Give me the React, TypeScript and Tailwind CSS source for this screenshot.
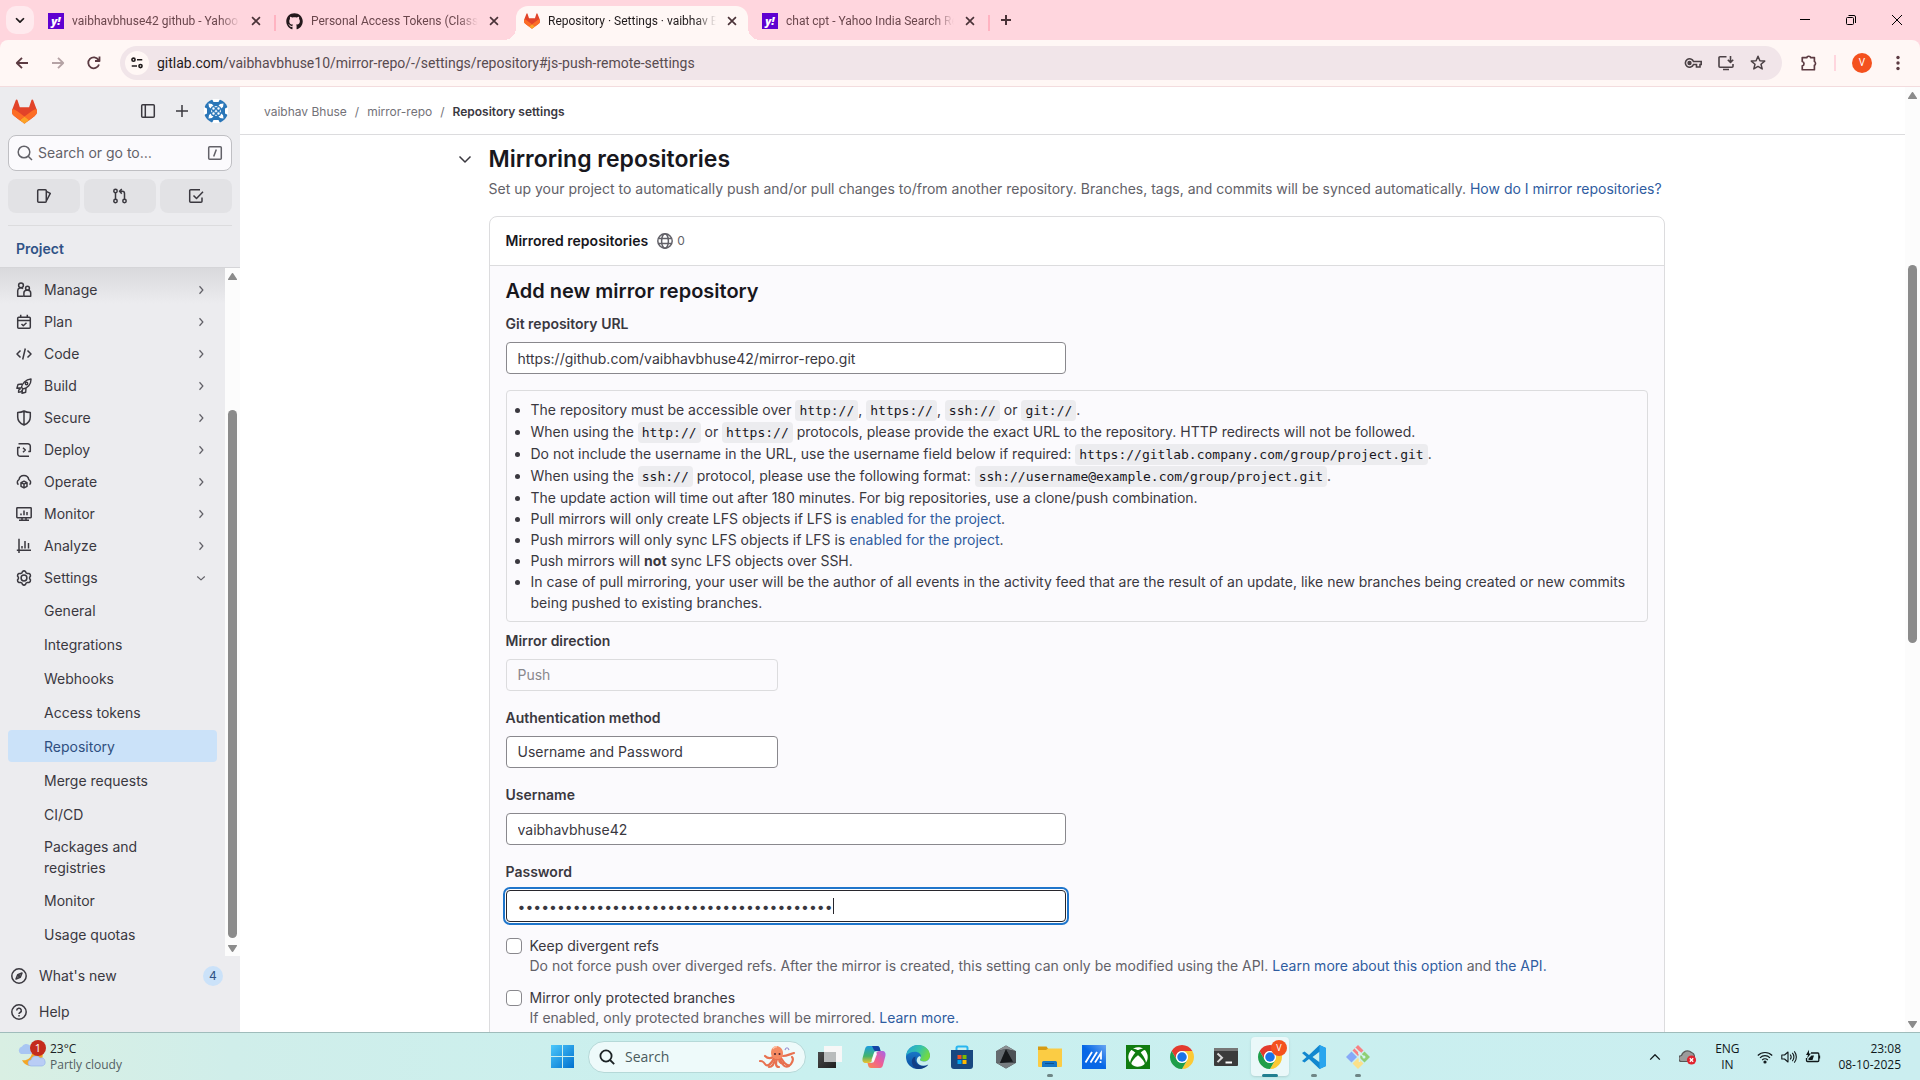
import { useState, type ReactNode } from "react";
import { FaGithub, FaXbox } from "react-icons/fa";

/* ---------- shared drawings ---------- */

function Icon({ children, size = 16, width = 1.5, className = "" }: { children: ReactNode; size?: number; width?: number; className?: string }) {
  return (
    <svg viewBox="0 0 16 16" width={size} height={size} fill="none" stroke="currentColor" strokeWidth={width} strokeLinecap="butt" strokeLinejoin="round" className={`shrink-0 ${className}`} aria-hidden="true">
      {children}
    </svg>
  );
}

function GitLabLogo({ size }: { size: number }) {
  return (
    <svg viewBox="0 0 25 24" width={size} height={size} className="shrink-0" aria-hidden="true">
      <path d="m24.507 9.5-.034-.09L21.082.562a.896.896 0 0 0-1.694.091l-2.29 7.01H7.825L5.535.653a.898.898 0 0 0-1.694-.09L.451 9.411.416 9.5a6.297 6.297 0 0 0 2.09 7.278l.012.01.03.022 5.16 3.867 2.56 1.935 1.554 1.176a1.051 1.051 0 0 0 1.268 0l1.555-1.176 2.56-1.935 5.197-3.89.014-.01A6.297 6.297 0 0 0 24.507 9.5Z" fill="#E24329" />
      <path d="m24.507 9.5-.034-.09a11.44 11.44 0 0 0-4.56 2.051l-7.447 5.632 4.742 3.584 5.197-3.89.014-.01A6.297 6.297 0 0 0 24.507 9.5Z" fill="#FC6D26" />
      <path d="m7.707 20.677 2.56 1.935 1.555 1.176a1.051 1.051 0 0 0 1.268 0l1.555-1.176 2.56-1.935-4.743-3.584-4.755 3.584Z" fill="#FCA326" />
      <path d="M5.01 11.461a11.43 11.43 0 0 0-4.56-2.05L.416 9.5a6.297 6.297 0 0 0 2.09 7.278l.012.01.03.022 5.16 3.867 4.745-3.584-7.444-5.632Z" fill="#FC6D26" />
    </svg>
  );
}

function YahooIcon() {
  return (
    <span className="flex size-4 shrink-0 items-center justify-center bg-[#5f01d1] font-['Open_Sans',sans-serif] text-[11px] leading-4 font-extrabold text-white italic">
      y!
    </span>
  );
}

function ChromeLogo() {
  const arm = "M24 12H44.78A24 24 0 0 0 3.22 12L13.6 30A12 12 0 0 1 24 12Z";
  return (
    <svg viewBox="0 0 48 48" width="24" height="24" aria-hidden="true">
      <path d={arm} fill="#e33b2e" />
      <path d={arm} fill="#fcc934" transform="rotate(120 24 24)" />
      <path d={arm} fill="#1e9e4a" transform="rotate(240 24 24)" />
      <circle cx="24" cy="24" r="12" fill="#fff" />
      <circle cx="24" cy="24" r="9.5" fill="#1a73e8" />
    </svg>
  );
}

/* ---------- browser ---------- */

function Tab({ icon, title, active = false }: { icon: ReactNode; title: string; active?: boolean }) {
  return (
    <div className={`relative flex h-[34px] w-[232px] shrink-0 items-center px-2 pb-1 ${active ? "rounded-t-xl bg-[#fff7f5] text-[#1f1a1b]" : "text-[#6b474d]"}`}>
      {active && (
        <>
          <span className="absolute bottom-0 -left-3 size-3 bg-[radial-gradient(circle_at_0_0,#ffd6de_12px,#fff7f5_12px)]" />
          <span className="absolute -right-3 bottom-0 size-3 bg-[radial-gradient(circle_at_100%_0,#ffd6de_12px,#fff7f5_12px)]" />
        </>
      )}
      {icon}
      <span className="ml-2 min-w-0 flex-1 overflow-hidden text-xs whitespace-nowrap [mask-image:linear-gradient(to_right,#000_88%,transparent)]">{title}</span>
      <button aria-label={`Close ${title}`} className="ml-2 flex size-4 items-center justify-center text-[#4a3338]">
        <Icon size={14} width={1.9}><path d="M3.5 3.5l9 9M12.5 3.5l-9 9" /></Icon>
      </button>
    </div>
  );
}

function TabStrip() {
  return (
    <div className="flex h-10 items-end bg-[#ffd6de] text-[#4a3338]">
      <button aria-label="Search tabs" className="mb-[6px] ml-[6px] flex size-7 shrink-0 items-center justify-center rounded-[10px] bg-[#ffeaee] text-[#1f1a1b]">
        <Icon size={14} width={2}><path d="M3.5 6l4.5 4.500L12.500 6" /></Icon>
      </button>
      <div className="ml-[6px] flex items-center gap-[2px]">
        <Tab icon={<YahooIcon />} title="vaibhavbhuse42 github - Yahoo" />
        <span className="h-4 w-[2px] bg-[#ffb3c1]" />
        <Tab icon={<FaGithub size={17} className="shrink-0 text-[#24191c]" />} title="Personal Access Tokens (Classic)" />
        <span className="w-[2px]" />
        <Tab active icon={<GitLabLogo size={16} />} title="Repository · Settings · vaibhav B" />
        <span className="w-[2px]" />
        <Tab icon={<YahooIcon />} title="chat cpt - Yahoo India Search Re" />
        <span className="h-4 w-[2px] bg-[#ffb3c1]" />
      </div>
      <button aria-label="New tab" className="mb-3 ml-2 flex size-4 items-center justify-center">
        <Icon size={16} width={2}><path d="M8 3v10M3 8h10" /></Icon>
      </button>
      <div className="mb-2 ml-auto flex text-black">
        <button aria-label="Minimize" className="flex h-6 w-[46px] items-center justify-center"><Icon size={16} width={1}><path d="M3 7.500h10" /></Icon></button>
        <button aria-label="Restore" className="flex h-6 w-[46px] items-center justify-center">
          <Icon size={16} width={1}><rect x="3.500" y="5.500" width="7" height="7" rx="1" /><path d="M5.500 3.500H11a1.500 1.500 0 0 1 1.500 1.500v6" /></Icon>
        </button>
        <button aria-label="Close" className="flex h-6 w-[46px] items-center justify-center"><Icon size={16} width={1}><path d="M3 3l10 10M13 3L3 13" /></Icon></button>
      </div>
    </div>
  );
}

function AddressBar() {
  return (
    <div className="bg-[#ffd6de]">
      <div className="flex h-[47px] items-center rounded-t-lg border-b border-[#f3dcde] bg-[#fff7f5] pr-[14px] text-[#5c3b42]">
        <div className="flex w-[120px] shrink-0 gap-5 pl-[14px]">
          <button aria-label="Back"><Icon size={16} width={1.8}><path d="M14 8H2.500M8 2.800L2.800 8 8 13.200" /></Icon></button>
          <button aria-label="Forward" className="text-[#b5a3a5]"><Icon size={16} width={1.800}><path d="M2 8h11.500M8 2.800L13.200 8 8 13.200" /></Icon></button>
          <button aria-label="Reload"><Icon size={16} width={1.800}><path d="M13 9.500A5.500 5.500 0 1 1 12.500 5M13.500 1.500V6H9" /></Icon></button>
        </div>
        <div className="flex h-[34px] min-w-0 flex-1 items-center rounded-full bg-[#f1e5e9] pr-4 pl-[5px]">
          <button aria-label="View site information" className="flex size-6 items-center justify-center rounded-full bg-[#fff7f5] text-[#1f1a1b]">
            <Icon size={14} width={1.800}><circle cx="4" cy="4.200" r="1.800" /><path d="M8 4.200h6M2 11.500h6" /><circle cx="12" cy="11.500" r="1.800" /></Icon>
          </button>
          <span className="ml-2 flex-1 truncate text-sm text-[#584b50]">
            <span className="text-[#1f1a1b]">gitlab.com</span>/vaibhavbhuse10/mirror-repo/-/settings/repository#js-push-remote-settings
          </span>
          <div className="flex items-center gap-4 text-[#4b4145]">
            <button aria-label="Saved passwords"><svg width="18" height="16" viewBox="0 0 18 16" fill="none" stroke="currentColor" strokeWidth="1.600" aria-hidden="true"><path d="M9.500 6.500H17.200V9.500H16V12H12.500V9.500H9.500A4.200 4.200 0 1 1 9.500 6.500Z" /><circle cx="5.500" cy="8" r="1.400" fill="currentColor" /></svg></button>
            <button aria-label="Install app"><Icon size={16} width={1.600}><path d="M8.500 1.800H2A1 1 0 0 0 1 2.800v8.400a1 1 0 0 0 1 1h12a1 1 0 0 0 1-1V9M5 14.500h6M12.500 1v6M9.800 4.800l2.700 2.700 2.700-2.700" /></Icon></button>
            <button aria-label="Bookmark this tab"><Icon size={16} width={1.500}><path d="M8 1.300l1.900 4.400 4.800.4-3.700 3.100 1.200 4.700L8 11.400l-4.200 2.500L5 9.200 1.300 6.100l4.800-.4z" /></Icon></button>
          </div>
        </div>
        <button aria-label="Extensions" className="ml-[18px]"><Icon size={18} width={1.500}><path d="M2 3.200h4.200a1.600 1.200 0 0 1 3.200 0h3.400v3.500a1.300 1.700 0 0 1 0 3.300v4H2v-3.400a2 2 0 0 0 0-3.900z" /></Icon></button>
        <span className="ml-4 h-4 w-[2px] bg-[#ffd6de]" />
        <button aria-label="Profile" className="ml-4 flex size-5 items-center justify-center rounded-full bg-[#f4511e] text-[10px] leading-5 text-white">V</button>
        <button aria-label="Menu" className="ml-[18px]"><svg width="16" height="16" viewBox="0 0 16 16" fill="currentColor" aria-hidden="true"><circle cx="8" cy="2.500" r="1.700" /><circle cx="8" cy="8" r="1.700" /><circle cx="8" cy="13.500" r="1.700" /></svg></button>
      </div>
    </div>
  );
}

function Arrow({ down = false }: { down?: boolean }) {
  return (
    <svg width="9" height="7" viewBox="0 0 9 7" fill="#8b8b8b" aria-hidden="true">
      {down ? <path d="M.5 0h8a.6.6 0 0 1 .4 1L5.300 6.500a1 1 0 0 1-1.600 0L.1 1a.6.6 0 0 1 .4-1z" /> : <path d="M.5 7h8a.6.6 0 0 0 .4-1L5.300.5a1 1 0 0 0-1.600 0L.1 6a.6.6 0 0 0 .4 1z" />}
    </svg>
  );
}

/* ---------- GitLab sidebar ---------- */

const navItems: { label: string; icon: ReactNode }[] = [
  { label: "Manage", icon: <Icon><circle cx="5" cy="3.300" r="2.400" /><path d="M7.500 14.300H1.700V8.800a3 3 0 0 1 5.200-2" /><circle cx="11.500" cy="6.200" r="1.900" /><path d="M7.900 14.300v-3.200a2.800 2.800 0 0 1 2.800-2.800h1.200a2.800 2.800 0 0 1 2.800 2.800v3.200z" /></Icon> },
  { label: "Plan", icon: <Icon><rect x="1.700" y="3.300" width="12.600" height="11" rx="1" /><path d="M1.700 6.500h12.600M4.700.8v3M11.300.8v3M5.500 10l1.800 1.700L10.500 8.800" /></Icon> },
  { label: "Code", icon: <Icon><path d="M4.500 4.500L1 8l3.500 3.500M11.500 4.500L15 8l-3.500 3.500M9.300 2.500l-2.600 11" /></Icon> },
  { label: "Build", icon: <Icon width={1.400}><path d="M5.500 9.200c.6-3.700 4-7.700 9.500-8.200.2 5.500-3.500 9.300-8 9.900zM6 6L2 6.500.9 10.300l4.300-.6M10 10.300l-.3 4L6 15.300l.6-4.200M5.200 10.500c-1.700 0-2.700 1.500-2.700 3.800 1.800 0 3-.6 3.800-2" /><circle cx="10.500" cy="5.500" r="1.200" /></Icon> },
  { label: "Secure", icon: <Icon><path d="M8 1C6 2.200 4 2.600 1.700 2.600V7c0 3.800 2.300 6.500 6.300 8 4-1.500 6.300-4.200 6.300-8V2.600C12 2.600 10 2.200 8 1zM8 1v14" /></Icon> },
  { label: "Deploy", icon: <Icon><path d="M2.500 1.700h9.300a2.500 2.500 0 0 1 2.500 2.500v5.300h-2M13 14.300H4.200a2.500 2.500 0 0 1-2.500-2.500V5.500H4M7 5.700L9.300 8 7 10.300" /></Icon> },
  { label: "Operate", icon: <Icon><path d="M2.500 10.700A3 3 0 0 1 3 5.600 5 5 0 0 1 12.800 5.600a3 3 0 0 1 .7 5.100" /><path d="M8 7.200l3 1.500v3.600l-3 1.600-3-1.600V8.700zM5 8.700l3 1.500 3-1.500M8 10.200v3.700" /></Icon> },
  { label: "Monitor", icon: <Icon><rect x=".8" y="1.700" width="14.400" height="10" rx=".6" /><path d="M5 7.500v1.800M8 4.500v4.800M11 6v3.300M6 11.700v2.600M10 11.700v2.600M3 14.300h10" /></Icon> },
  { label: "Analyze", icon: <Icon><path d="M3 .8V15M.8 12.300H15M6 8v2.500M9 3v7.500M12.500 5v5.500" /></Icon> },
  { label: "Settings", icon: <Icon><path d="M6.500 1.500l1.500-.7 1.500.7.500 1.300 1.500.8 1.400-.2 1.300 1 .3 1.700-.9 1.200v1.400l.9 1.200-.3 1.700-1.300 1-1.400-.2-1.500.8-.5 1.300-1.500.7-1.500-.7-.500-1.300-1.500-.8-1.400.2-1.300-1-.3-1.700.9-1.200V7.300l-.9-1.200.3-1.700 1.300-1 1.400.2 1.500-.8z" /><circle cx="8" cy="8" r="2.900" /></Icon> },
];

const settingsItems = ["General", "Integrations", "Webhooks", "Access tokens", "Repository", "Merge requests", "CI/CD", "Packages and registries", "Monitor", "Usage quotas"];

function Sidebar() {
  return (
    <aside className="flex w-60 shrink-0 flex-col bg-[#ececef] text-sm text-[#3a383f]">
      <div className="flex h-12 items-center pr-3 pl-3">
        <a href="#home" aria-label="Homepage"><GitLabLogo size={25} /></a>
        <button aria-label="Collapse sidebar" className="ml-auto"><Icon><rect x="1.700" y="1.700" width="12.600" height="12.600" rx="1" /><path d="M5.300 1.700v12.600" /></Icon></button>
        <button aria-label="Create new" className="ml-[18px]"><Icon><path d="M8 2v12M2 8h12" /></Icon></button>
        <button aria-label="User menu" className="ml-[14px]">
          <svg width="24" height="24" viewBox="0 0 24 24" aria-hidden="true">
            <circle cx="12" cy="12" r="12" fill="#2a76b8" />
            <g fill="#fff">
              <path d="M8 0l1.500 3h5L16 0zM8 24l1.500-3h5l1.500 3zM0 8l3 1.500v5L0 16zM24 8l-3 1.500v5l3 1.500z" />
              <path d="M4.500 4.500l3.500.5 1.500 2h5L16 5l3.500-.5L19 8l-2 1.500v5l2 1.500.5 3.500L16 19l-1.500-2h-5L8 19l-3.500.5L5 16l2-1.500v-5L5 8z" />
            </g>
            <g fill="none" stroke="#2a76b8" strokeWidth="1.300">
              <circle cx="9.500" cy="9.500" r="1.900" /><circle cx="14.500" cy="9.500" r="1.900" /><circle cx="9.500" cy="14.500" r="1.900" /><circle cx="14.500" cy="14.500" r="1.900" />
            </g>
          </svg>
        </button>
      </div>
      <div className="px-2">
        <button className="flex h-9 w-full items-center rounded-lg border border-[#bfbfc3] bg-[#fbfafd] px-2 text-[#626168]">
          <Icon><circle cx="7" cy="7" r="5.800" /><path d="M11.200 11.200L15 15" /></Icon>
          <span className="ml-[5px]">Search or go to…</span>
          <Icon className="ml-auto"><rect x="1.700" y="1.700" width="12.600" height="12.600" rx="1" /><path d="M9.300 4.500l-2.600 7" /></Icon>
        </button>
        <div className="mt-2 grid grid-cols-3 gap-1">
          <button aria-label="Assigned issues" className="flex h-[34px] items-center justify-center rounded-lg bg-[#e2e2e5]"><Icon><rect x="1.700" y="1.700" width="8.600" height="12.600" rx="1" /><path d="M10.300 3.300l4 2-3.700 7.200" /></Icon></button>
          <button aria-label="Merge requests" className="flex h-[34px] items-center justify-center rounded-lg bg-[#e2e2e5]"><Icon><circle cx="3.500" cy="3" r="1.700" /><circle cx="3.500" cy="13" r="1.700" /><circle cx="12.500" cy="13" r="1.700" /><path d="M3.500 4.700v6.600M12.500 11.300V5.500a2.200 2.200 0 0 0-2.200-2.200H8M9.800 1L7.500 3.300l2.300 2.300" /></Icon></button>
          <button aria-label="To-do items" className="flex h-[34px] items-center justify-center rounded-lg bg-[#e2e2e5]"><Icon><path d="M14 9.500v3.800a1 1 0 0 1-1 1H2.700a1 1 0 0 1-1-1V2.700a1 1 0 0 1 1-1H12M5.500 7.500l3 3L15 3.800" /></Icon></button>
        </div>
        <div className="mt-3 border-t border-[#dcdcde]" />
      </div>
      <h2 className="flex h-[41px] items-center pt-1 pl-4 font-semibold text-[#2f5286]">Project</h2>
      <div className="flex min-h-0 flex-1 border-t border-[#d5d5d8]">
        <nav className="min-w-0 flex-1 overflow-hidden bg-[linear-gradient(#d9d9dc,#ececef_36px)] px-2 pt-[6px]">
          {navItems.map(({ label, icon }) => (
            <button key={label} className="flex h-8 w-full items-center px-2 text-left">
              {icon}
              <span className="ml-3 flex-1">{label}</span>
              <Icon size={12} width={1.600} className="mr-[2px] text-[#626168]">{label === "Settings" ? <path d="M3 6l5 4.500L13 6" /> : <path d="M6 3l4.500 5L6 13" />}</Icon>
            </button>
          ))}
          {settingsItems.map((label) => (
            <a key={label} href="#settings" className={`mb-[2px] flex min-h-8 items-center rounded py-1 pr-12 pl-9 leading-[21px] ${label === "Repository" ? "bg-[#cbe2f9] text-[#2f4f7f]" : ""}`}>
              {label}
            </a>
          ))}
        </nav>
        <div className="flex w-[15px] shrink-0 flex-col items-center bg-[#fcfcfc] pt-[5px] pb-1">
          <Arrow />
          <span className="mt-[130px] mb-[7px] w-[9px] flex-1 rounded-full bg-[#8b8b8b]" />
          <Arrow down />
        </div>
      </div>
      <div className="flex h-[76px] flex-col pt-[2px] pr-[17px] pl-[11px]">
        <button className="flex h-9 items-center text-left">
          <Icon><circle cx="8" cy="8" r="7.200" /><path d="M11 5L9.300 9.300 5 11l1.700-4.300z" /><circle cx="8" cy="8" r=".5" /></Icon>
          <span className="ml-3 flex-1">What's new</span>
          <span className="flex size-5 items-center justify-center rounded-full bg-[#cbe2f9] text-xs text-[#2f5286]">4</span>
        </button>
        <button className="flex h-9 items-center text-left">
          <Icon><circle cx="8" cy="8" r="7.200" /><path d="M5.700 6.500a2.300 2.300 0 1 1 3.400 2c-.7.400-1.100.8-1.100 1.600M8 11v1.500" /></Icon>
          <span className="ml-3">Help</span>
        </button>
      </div>
    </aside>
  );
}

/* ---------- GitLab settings page ---------- */

function Code({ children }: { children: ReactNode }) {
  return <code className="rounded bg-[#ececef] px-1 py-[3px] font-['DejaVu_Sans_Mono',monospace] text-[13px] leading-none text-[#18171d]">{children}</code>;
}

function Link({ children }: { children: ReactNode }) {
  return <a href="#docs" className="text-[#2f5ca0]">{children}</a>;
}

const labelStyle = "mb-2 block leading-[21px] font-semibold text-[#3a383f]";
const fieldStyle = "block h-8 max-w-full appearance-none rounded border border-[#89888d] bg-white px-[11px] text-sm text-[#3a383f] outline-none";

function MirrorForm() {
  const [url, setUrl] = useState("https://github.com/vaibhavbhuse42/mirror-repo.git");
  const [user, setUser] = useState("vaibhavbhuse42");
  const [password, setPassword] = useState("x".repeat(40));
  return (
    <form className="bg-[#fbfafd] px-4 pt-3 pb-10">
      <h3 className="mb-2 text-xl leading-[27px] font-semibold text-[#18171d]">Add new mirror repository</h3>
      <label htmlFor="url" className={labelStyle}>Git repository URL</label>
      <input id="url" value={url} onChange={(e) => setUrl(e.target.value)} className={`${fieldStyle} w-[560px]`} />
      <div className="mt-4 mb-2 rounded border border-[#dcdcde] p-2 pr-4">
        <ul className="list-disc pl-4 leading-[21px]">
          <li className="leading-[22px]">The repository must be accessible over <Code>http://</Code>, <Code>https://</Code>, <Code>ssh://</Code> or <Code>git://</Code>.</li>
          <li className="leading-[22px]">When using the <Code>http://</Code> or <Code>https://</Code> protocols, please provide the exact URL to the repository. HTTP redirects will not be followed.</li>
          <li className="leading-[22px]">Do not include the username in the URL, use the username field below if required: <Code>https://gitlab.company.com/group/project.git</Code>.</li>
          <li className="leading-[22px]">When using the <Code>ssh://</Code> protocol, please use the following format: <Code>ssh://username@example.com/group/project.git</Code>.</li>
          <li>The update action will time out after 180 minutes. For big repositories, use a clone/push combination.</li>
          <li>Pull mirrors will only create LFS objects if LFS is <Link>enabled for the project</Link>.</li>
          <li>Push mirrors will only sync LFS objects if LFS is <Link>enabled for the project</Link>.</li>
          <li>Push mirrors will <strong>not</strong> sync LFS objects over SSH.</li>
          <li>In case of pull mirroring, your user will be the author of all events in the activity feed that are the result of an update, like new branches being created or new commits being pushed to existing branches.</li>
        </ul>
      </div>
      <label htmlFor="direction" className={labelStyle}>Mirror direction</label>
      <select id="direction" disabled className="mb-4 block h-8 w-[272px] appearance-none rounded border border-[#dcdcde] bg-[#fbfafd] px-[11px] text-sm text-[#89888d] opacity-100">
        <option>Push</option>
      </select>
      <label htmlFor="auth" className={labelStyle}>Authentication method</label>
      <select id="auth" className={`${fieldStyle} mb-4 w-[272px]`}>
        <option>Username and Password</option>
      </select>
      <label htmlFor="user" className={labelStyle}>Username</label>
      <input id="user" value={user} onChange={(e) => setUser(e.target.value)} className={`${fieldStyle} mb-4 w-[560px]`} />
      <label htmlFor="password" className={labelStyle}>Password</label>
      <div className="relative w-[560px] max-w-full">
        <input id="password" type="password" value={password} onChange={(e) => setPassword(e.target.value)} className="block h-8 w-full rounded border border-[#28272d] bg-white px-[11px] text-sm text-[#3a383f] shadow-[0_0_0_1px_#fff,0_0_0_3px_#1f75cb] outline-none" />
        <span className="absolute top-2 left-[327px] h-4 w-px bg-[#28272d]" />
      </div>
      <div className="mt-[14px] flex gap-2 leading-5">
        <input id="divergent" type="checkbox" className="mt-[2px] size-4 shrink-0 appearance-none rounded border border-[#89888d] bg-white" />
        <div>
          <label htmlFor="divergent" className="block">Keep divergent refs</label>
          <p className="text-[#626168]">Do not force push over diverged refs. After the mirror is created, this setting can only be modified using the API. <Link>Learn more about this option</Link> and <Link>the API.</Link></p>
        </div>
      </div>
      <div className="mt-3 flex gap-2 leading-5">
        <input id="protected" type="checkbox" className="mt-[2px] size-4 shrink-0 appearance-none rounded border border-[#89888d] bg-white" />
        <div>
          <label htmlFor="protected" className="block">Mirror only protected branches</label>
          <p className="text-[#626168]">If enabled, only protected branches will be mirrored. <Link>Learn more.</Link></p>
        </div>
      </div>
    </form>
  );
}

function Page() {
  return (
    <div className="flex min-w-0 flex-1">
      <div className="flex min-w-0 flex-1 flex-col">
        <nav className="flex h-12 shrink-0 items-center gap-2 border-b border-[#dcdcde] px-6 pt-[2px] text-xs text-[#737278]">
          <a href="#user">vaibhav Bhuse</a><span>/</span><a href="#repo">mirror-repo</a><span>/</span>
          <span className="font-semibold text-[#3a383f]">Repository settings</span>
        </nav>
        <main className="min-h-0 flex-1 overflow-hidden">
          <section className="mx-auto flex max-w-[1240px] pt-2 pr-7 text-sm text-[#3a383f]">
            <button aria-label="Collapse section" className="flex h-8 w-9 shrink-0 items-center pl-1"><Icon><path d="M2.500 5.500L8 11l5.500-5.500" /></Icon></button>
            <div className="min-w-0 flex-1">
              <h2 className="text-[23px] leading-8 font-semibold text-[#18171d]">Mirroring repositories</h2>
              <p className="mt-[3px] mb-[17px] leading-[21px] text-[#626168]">Set up your project to automatically push and/or pull changes to/from another repository. Branches, tags, and commits will be synced automatically. <Link>How do I mirror repositories?</Link></p>
              <div className="overflow-hidden rounded-lg border border-[#dcdcde]">
                <header className="flex h-[49px] items-center border-b border-[#dcdcde] px-4 text-[#626168]">
                  <h3 className="font-semibold text-[#18171d]">Mirrored repositories</h3>
                  <Icon className="ml-[9px]"><circle cx="8" cy="8" r="7.200" /><ellipse cx="8" cy="8" rx="3.400" ry="7.200" /><path d="M1.500 5.500h13M1.500 10.500h13" /></Icon>
                  <span className="ml-1 text-xs">0</span>
                </header>
                <MirrorForm />
              </div>
            </div>
          </section>
        </main>
      </div>
      <div className="flex w-[15px] shrink-0 flex-col items-center bg-[#fcfcfc] pt-[5px] pb-1">
        <Arrow />
        <div className="flex w-full flex-1 flex-col items-center">
          <span className="h-[18%]" />
          <span className="h-[41%] w-[9px] rounded-full bg-[#8b8b8b]" />
        </div>
        <Arrow down />
      </div>
    </div>
  );
}

/* ---------- Windows taskbar ---------- */

function Octopus() {
  return (
    <svg width="38" height="24" viewBox="0 0 38 24" fill="none" aria-hidden="true">
      <g stroke="#e8714f" strokeWidth="2.200" strokeLinecap="round">
        <path d="M15 13C12 20 8 22 6 19s-3-3-5-3" />
        <path d="M16 14c-1 6-3 8-6 8" />
        <path d="M22 13c4 7 8 9 10 6s3-5 1-7" />
        <path d="M21 14c2 6 5 9 9 7" />
        <path d="M14 12c-3 2-6 1-8-1" />
        <path d="M24 11c4 0 7-2 11-3" />
        <path d="M18 14c-2 5-1 8 2 8" />
        <path d="M20 14c0 4 3 5 5 4" />
      </g>
      <path d="M12 8c0-5 3-7 5.500-7S24 3.500 24 8c0 3-1 6-5.500 6S12 11 12 8z" fill="#f58a62" />
      <path d="M14 4c1-2 3-2.500 4-2" stroke="#ffc3a8" strokeWidth="1.500" />
      <circle cx="16" cy="9" r="1" fill="#4b2430" /><circle cx="20.500" cy="9" r="1" fill="#4b2430" />
      <path d="M26 5c1-3 3-3 4 0" stroke="#9a8fd0" strokeWidth="1.200" />
    </svg>
  );
}

const taskApps: { name: string; icon: ReactNode; running?: boolean; active?: boolean }[] = [
  {
    name: "Task view",
    icon: (
      <svg width="24" height="24" viewBox="0 0 24 24" aria-hidden="true">
        <defs><linearGradient id="tv" x1="0" y1="0" x2="1" y2="1"><stop stopColor="#4a4a4a" /><stop offset="1" stopColor="#1f1f1f" /></linearGradient></defs>
        <rect x="0" y="7" width="18" height="16" fill="url(#tv)" /><rect x="6" y="1" width="18" height="16" fill="#f7f7f7" /><rect x="6" y="7" width="12" height="10" fill="#b9bcbc" />
      </svg>
    ),
  },
  {
    name: "Copilot",
    icon: (
      <svg width="24" height="24" viewBox="0 0 24 24" aria-hidden="true">
        <defs>
          <linearGradient id="c1" x1="0" y1="0" x2="0" y2="1"><stop stopColor="#1b9de2" /><stop offset=".6" stopColor="#43b36b" /><stop offset="1" stopColor="#f2c12e" /></linearGradient>
          <linearGradient id="c2" x1="1" y1="0" x2="0" y2="1"><stop stopColor="#a667e8" /><stop offset=".5" stopColor="#ee5e95" /><stop offset="1" stopColor="#fb8a4a" /></linearGradient>
        </defs>
        <path d="M6 1h9c2 0 2.500 1 3 3l.5 2H15c-2 0-2.500 1-3 3l-2 6c-.5 2-1.500 3-3.500 3H4c-3 0-4-2-3.400-5L3 4c.5-2 1.500-3 3-3z" fill="url(#c1)" />
        <path d="M10 1h5c2 0 2.500 1 3 3l.5 2H14c-1.500 0-2-.5-2.500-2z" fill="#1443a5" />
        <path d="M18 23H9c-2 0-2.500-1-3-3l-.5-2H9c2 0 2.500-1 3-3l2-6c.5-2 1.500-3 3.500-3H20c3 0 4 2 3.400 5L21 20c-.5 2-1.500 3-3 3z" fill="url(#c2)" />
        <path d="M9.500 15l2-6c.3-1 .8-2 1.500-2.700L15 9l-2.500 6.500c-.3 1-.8 1.800-1.500 2.300z" fill="#fff" opacity=".85" />
      </svg>
    ),
  },
  {
    name: "Microsoft Edge",
    icon: (
      <svg width="24" height="24" viewBox="0 0 24 24" aria-hidden="true">
        <defs>
          <linearGradient id="e1" x1="0" y1="0" x2="1" y2=".4"><stop stopColor="#1fa2dc" /><stop offset=".6" stopColor="#38c4a6" /><stop offset="1" stopColor="#72d943" /></linearGradient>
          <linearGradient id="e2" x1="0" y1="0" x2="0" y2="1"><stop stopColor="#1d86d6" /><stop offset="1" stopColor="#0c4fa0" /></linearGradient>
        </defs>
        <circle cx="12" cy="12" r="12" fill="url(#e2)" />
        <path d="M0 11C.8 4.500 5.800 0 12 0c7 0 12 5 12 10.500 0 4-3 6-6 6-2.500 0-4-1-4-2 0-.8 1-1.200 1-3 0-2.500-2.500-4.700-6-4.700C5 6.800 1.500 8.500 0 11z" fill="url(#e1)" />
        <path d="M9.500 11.500C8 16 11 21 17 21c2 0 3.500-.7 4.700-1.400.3-.2.600.1.4.4C20 22.600 16 24 12.500 24 8 24 5 19 6 15c.5-2 2-3.200 3.500-3.500z" fill="#123f86" />
        <path d="M14 14.500c0 1 1.500 2 4 2 2.800 0 5.500-1.600 6-4.700V17l-2 2.500c-4 2.200-9.500 1.300-11-2.500-.8-2 0-4.500 1.800-5.500.9-.5 2 .2 2 .9 0 1-.8 1.300-.8 2.100z" fill="#c9efee" />
      </svg>
    ),
  },
  {
    name: "Microsoft Store",
    icon: (
      <svg width="24" height="24" viewBox="0 0 24 24" aria-hidden="true">
        <path d="M6.500 6V3A1.500 1.500 0 0 1 8 1.500h8A1.500 1.500 0 0 1 17.500 3v3" fill="none" stroke="#29b6f0" strokeWidth="2" />
        <path d="M1 5h22v16a3 3 0 0 1-3 3H4a3 3 0 0 1-3-3z" fill="#184880" />
        <path fill="#f25022" d="M7.500 10h4v4h-4z" /><path fill="#7fba00" d="M12.500 10h4v4h-4z" /><path fill="#00a4ef" d="M7.500 15h4v4h-4z" /><path fill="#ffb900" d="M12.500 15h4v4h-4z" />
      </svg>
    ),
  },
  {
    name: "Cursor",
    icon: (
      <svg width="24" height="24" viewBox="0 0 24 24" aria-hidden="true">
        <path d="M12 .500l10 5.800v11.400L12 23.500 2 17.700V6.300z" fill="#3a3f43" />
        <path d="M12 .500l10 5.800L12 4 2 6.300z" fill="#8b9093" /><path d="M2 6.300L12 4 6 18 2 17.700z" fill="#656b6f" /><path d="M2 17.700L6 18l16-.3-10 5.800z" fill="#777d80" />
        <path d="M12 4l7 12.500L6 18z" fill="#16191b" /><path d="M12 4l10 2.300v11.400l-3-1.200z" fill="#4d5256" />
      </svg>
    ),
  },
  {
    name: "File Explorer",
    running: true,
    icon: (
      <svg width="24" height="24" viewBox="0 0 24 24" aria-hidden="true">
        <path d="M0 1.500h8.500L11 5H0z" fill="#d79b13" /><path d="M0 5h8l2-1.500h14V21a1 1 0 0 1-1 1H1a1 1 0 0 1-1-1z" fill="#fbcc44" />
        <path d="M4 22v-4.500A1.500 1.500 0 0 1 5.500 16h12a1.500 1.500 0 0 1 1.500 1.500V22z" fill="#1675c4" /><path d="M7 18.500h9" stroke="#0d4f8f" strokeWidth="1" />
      </svg>
    ),
  },
  {
    name: "MyASUS",
    icon: (
      <svg width="24" height="24" viewBox="0 0 24 24" aria-hidden="true">
        <defs><linearGradient id="as" x1="0" y1="1" x2="1" y2="0"><stop offset=".5" stopColor="#0767e6" /><stop offset="1" stopColor="#6aa6f2" /></linearGradient></defs>
        <rect width="24" height="24" fill="url(#as)" />
        <path d="M3.500 17.500L10 7M8.500 17.500L15 7M13 17.500L19 8v6.500" stroke="#fff" strokeWidth="1.800" fill="none" /><circle cx="18.500" cy="17" r="1.100" fill="#fff" />
      </svg>
    ),
  },
  { name: "Xbox", icon: <span className="flex size-6 items-center justify-center bg-[#107c10] text-white"><FaXbox size={20} /></span> },
  { name: "Google Chrome", icon: <ChromeLogo /> },
  {
    name: "Terminal",
    icon: (
      <svg width="24" height="24" viewBox="0 0 24 24" aria-hidden="true">
        <rect y="3" width="24" height="18" rx="1" fill="#3b3b3b" /><rect y="3" width="24" height="3" fill="#777" />
        <path d="M3.500 8.500L8 12.800l-4.500 4.300" stroke="#d8d8d8" strokeWidth="2" fill="none" /><path d="M11.500 17.500h6.500" stroke="#fff" strokeWidth="2" />
      </svg>
    ),
  },
  {
    name: "Google Chrome profile",
    active: true,
    icon: (
      <span className="relative block size-6">
        <ChromeLogo />
        <span className="absolute -top-[5px] -right-[5px] flex size-4 items-center justify-center rounded-full bg-[#f4511e] text-[9px] leading-4 text-white">V</span>
      </span>
    ),
  },
  {
    name: "Visual Studio Code",
    running: true,
    icon: (
      <svg width="24" height="24" viewBox="0 0 24 24" aria-hidden="true">
        <path d="M17.500 0L24 3v18l-6.500 3L7 14l-4.500 3.500L0 16l4.500-4L0 8l2.500-1.500L7 10zM17.500 6.800L10.500 12l7 5.200z" fill="#1187cf" fillRule="evenodd" />
        <path d="M17.500 0L24 3v18l-6.500 3z" fill="#2aa5ee" />
      </svg>
    ),
  },
  {
    name: "Git",
    running: true,
    icon: (
      <svg width="24" height="24" viewBox="0 0 24 24" aria-hidden="true">
        <path d="M12 0l5.500 5.500L12 11 6.500 5.500z" fill="#f88083" /><path d="M5.500 6.500L11 12l-5.500 5.500L0 12z" fill="#86a9f8" />
        <path d="M18.500 6.500L24 12l-5.500 5.500L13 12z" fill="#8fcf74" /><path d="M12 13l5.500 5.500L12 24l-5.500-5.500z" fill="#fbe08a" />
        <path d="M9 3l4.500 4.500V17M13.500 8l4.500 4" stroke="#d4f2f0" strokeWidth="1.500" fill="none" /><circle cx="13.500" cy="8" r="1.500" fill="#d4f2f0" /><circle cx="18" cy="12" r="1.500" fill="#d4f2f0" />
      </svg>
    ),
  },
];

function Taskbar() {
  return (
    <footer className="relative flex h-12 shrink-0 items-center justify-between border-t border-[#9fbcbb] bg-[linear-gradient(to_right,#d9efe3,#d0eeea_12%,#c9f0ef_40%,#cbeef0)] pr-[19px] pl-[18px] font-['Open_Sans',sans-serif] text-xs text-[#1b2224]">
      <button className="flex items-center gap-1 text-left">
        <span className="relative block h-8 w-7">
          <svg width="28" height="30" viewBox="0 0 28 30" aria-hidden="true">
            <path d="M3 13a4 4 0 0 1 1-7.500 5 5 0 0 1 8-1L14 13z" fill="#a9c6f3" /><path d="M14 12c5 1 9-1 9-5 4 7 1 18-8 18-6 0-9-2-11-6 4 1 9-1 10-7z" fill="#f4a626" />
            <path d="M13 25a3 3 0 0 1 0-6 5 5 0 0 1 9-2 4 4 0 0 1 2 8z" fill="#b9cdf5" stroke="#8fb0ea" strokeWidth=".6" />
          </svg>
          <span className="absolute -top-[1px] right-0 flex size-4 items-center justify-center rounded-full bg-[#c42b1c] text-[11px] leading-4 text-white">1</span>
        </span>
        <span className="leading-4">23°C<br /><span className="text-[#536062]">Partly cloudy</span></span>
      </button>
      <div className="absolute top-0 left-1/2 flex h-full -translate-x-1/2 items-center pl-[11px]">
        <button aria-label="Start" className="mr-[14px]">
          <svg width="23" height="23" viewBox="0 0 23 23" aria-hidden="true">
            <defs><linearGradient id="win" x1="0" y1="0" x2="1" y2="1"><stop stopColor="#4cc8fb" /><stop offset="1" stopColor="#0070cf" /></linearGradient></defs>
            <path d="M0 0h11v11H0zM12 0h11v11H12zM0 12h11v11H0zM12 12h11v11H12z" fill="url(#win)" />
          </svg>
        </button>
        <button className="mr-[2px] flex h-8 w-[218px] items-center rounded-full border border-[#b5d9d8] bg-[#eefafa] pr-2 pl-[10px] text-sm text-[#4b5b5c]">
          <Icon size={16} width={1.800} className="text-[#1b2224]"><circle cx="7" cy="7" r="5.600" /><path d="M11 11l4.200 4.200" /></Icon>
          <span className="ml-[10px] flex-1 text-left">Search</span>
          <Octopus />
        </button>
        {taskApps.map(({ name, icon, running, active }) => (
          <button key={name} aria-label={name} className="relative flex h-12 w-11 items-center justify-center">
            {active && <span className="absolute inset-x-[3px] top-[4px] bottom-[5px] rounded bg-[#eaf8f9] shadow-sm" />}
            <span className="relative">{icon}</span>
            {running && <span className="absolute bottom-[4px] h-[3px] w-[6px] rounded-full bg-[#6f8686]" />}
            {active && <span className="absolute bottom-[4px] h-[3px] w-4 rounded-full bg-[#217f91]" />}
          </button>
        ))}
      </div>
      <div className="flex items-center text-[#10181a]">
        <button aria-label="Show hidden icons"><Icon size={14} width={1.500}><path d="M2.500 11L8 5.500l5.500 5.500" /></Icon></button>
        <button aria-label="OneDrive" className="ml-[17px]">
          <svg width="18" height="16" viewBox="0 0 18 16" aria-hidden="true">
            <path d="M3 12.500a3 3 0 0 1-.5-6C4 2 9 .5 12.500 3.500c2 .5 3 2.500 3 5l-4 4z" fill="#9b9b9b" stroke="#555" strokeWidth="1.200" />
            <circle cx="12.500" cy="11" r="4.600" fill="#e0232e" /><path d="M10.800 9.300l3.400 3.400M14.200 9.300l-3.400 3.400" stroke="#fff" strokeWidth="1.300" />
          </svg>
        </button>
        <span className="ml-4 w-7 text-center leading-4">ENG IN</span>
        <button aria-label="Network, volume and battery" className="ml-4 flex gap-2">
          <Icon size={16} width={1.200}><path d="M.8 6.500a10.200 10.200 0 0 1 14.400 0M3 8.800a7 7 0 0 1 10 0M5.200 11a4 4 0 0 1 5.600 0" /><circle cx="8" cy="13" r="1" fill="currentColor" /></Icon>
          <Icon size={16} width={1.100}><path d="M.8 6v4h2.700l3.500 3V3L3.500 6zM9.200 5.500a4 4 0 0 1 0 5M11.300 3.800a6.300 6.300 0 0 1 0 8.400M13.300 2.300a9 9 0 0 1 0 11.400" /></Icon>
          <Icon size={16} width={1.300}><path d="M6 4h6.800a1 1 0 0 1 1 1v6.500a1 1 0 0 1-1 1H2.500a1 1 0 0 1-1-1V9M14.500 6.500v3" /><path d="M3.500 11V9.500L6.500 6.500H9L7.500 11zM4 .800L1 6h2l-1 3.500L6 4.500H4z" fill="currentColor" stroke="none" /></Icon>
        </button>
        <span className="ml-[17px] text-right leading-4">23:08<br />08-10-2025</span>
      </div>
    </footer>
  );
}

export default function App() {
  return (
    <div className="flex h-screen flex-col overflow-hidden bg-white font-[Inter,sans-serif]">
      <div className="font-[Roboto,sans-serif]">
        <TabStrip />
        <AddressBar />
      </div>
      <div className="flex min-h-0 flex-1">
        <Sidebar />
        <Page />
      </div>
      <Taskbar />
    </div>
  );
}
